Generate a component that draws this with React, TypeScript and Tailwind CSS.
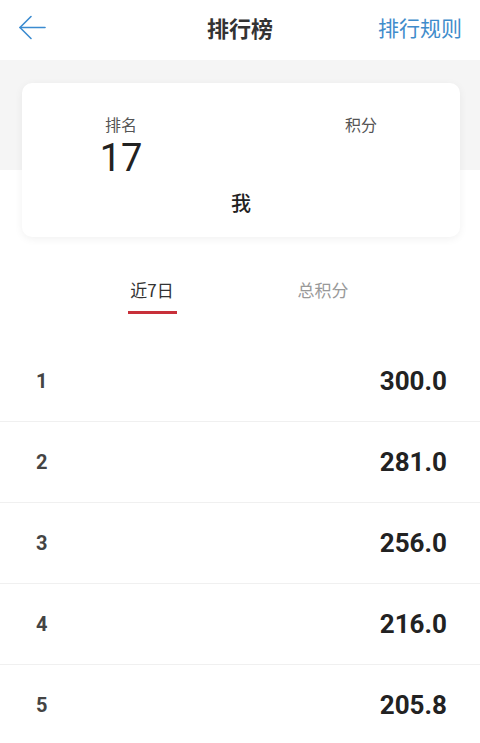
import React from "react";

const rows = [
  { rank: 1, score: "300.0" },
  { rank: 2, score: "281.0" },
  { rank: 3, score: "256.0" },
  { rank: 4, score: "216.0" },
  { rank: 5, score: "205.8" },
];

const cjk = "font-['Noto_Sans_CJK_SC','Noto_Sans',sans-serif]";
const num = "font-['Roboto','Noto_Sans_CJK_SC',sans-serif]";

export default function App() {
  return (
    <div className={`w-[480px] h-[743px] overflow-hidden bg-white ${cjk}`}>
      {/* Header */}
      <div className="h-[60px] flex items-center justify-between px-[18px] pb-[6px] relative">
        <svg width="28" height="28" viewBox="0 0 28 28" fill="none" stroke="#3b8bd0" strokeWidth="1.6" strokeLinecap="round" strokeLinejoin="round">
          <path d="M27 14.5H2" />
          <path d="M13 3.5L2 14.5L13 25.5" />
        </svg>
        <div className="absolute left-0 right-0 text-center text-[22px] font-bold text-[#333] leading-none pointer-events-none">排行榜</div>
        <div className="text-[21px] text-[#3f8ccb] leading-none">排行规则</div>
      </div>

      {/* Card area */}
      <div className="pt-[23px] pl-[22px] pr-[20px] bg-[linear-gradient(to_bottom,#f5f5f5_110px,#ffffff_110px)]">
        <div className="h-[154px] bg-white rounded-[10px] shadow-[0_2px_8px_rgba(0,0,0,0.06)] flex flex-col">
          <div className="flex justify-between px-[67px] pt-[30px]">
            <div className="w-16 flex flex-col items-center">
              <div className="text-[16px] leading-[22px] text-[#555]">排名</div>
              <div className={`${num} mt-[3px] text-[38px] leading-[40px] text-[#222]`}>17</div>
            </div>
            <div className="w-16 flex flex-col items-center">
              <div className="text-[16px] leading-[22px] text-[#555]">积分</div>
            </div>
          </div>
          <div className="mt-[11px] text-center text-[20px] leading-[28px] font-medium text-[#222]">我</div>
        </div>
      </div>

      {/* Tabs */}
      <div className="flex justify-center pt-[40px] mb-[27px] pr-[5px]">
        <div className="w-[171px] flex flex-col items-center">
          <div className="text-[17px] leading-[26px] text-[#333]">近7日</div>
          <div className="mt-[8px] w-[49px] h-[3px] bg-[#c8303a]" />
        </div>
        <div className="w-[171px] flex flex-col items-center">
          <div className="text-[17px] leading-[26px] text-[#999]">总积分</div>
        </div>
      </div>

      {/* Rows */}
      <div className="flex flex-col">
        {rows.map((r) => (
          <div key={r.rank} className="h-[81px] border-b border-[#f0f0f0] flex items-center justify-between pl-[36px] pr-[33px]">
            <span className={`${num} text-[20px] font-bold text-[#444]`}>{r.rank}</span>
            <span className={`${num} text-[26px] font-bold text-[#222]`}>{r.score}</span>
          </div>
        ))}
      </div>
    </div>
  );
}
